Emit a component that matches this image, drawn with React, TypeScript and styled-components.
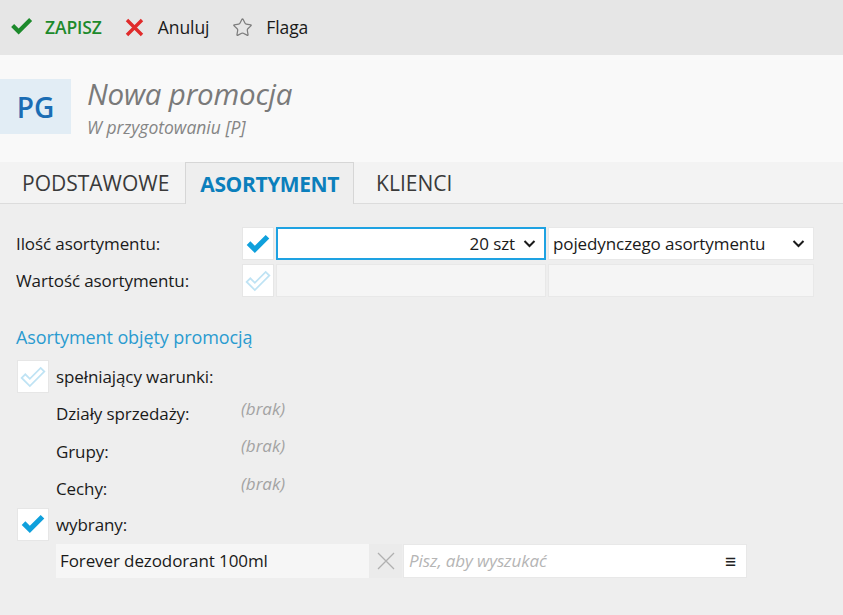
import styled, { createGlobalStyle } from 'styled-components'
import { Star } from 'lucide-react'

const GlobalStyle = createGlobalStyle`
  html, body {
    margin: 0;
    padding: 0;
    background: #eeeeee;
    font-family: 'Open Sans', 'Noto Sans', sans-serif;
    color: #1a1a1a;
  }
  * { box-sizing: border-box; }
`

const Page = styled.div`
  width: 843px;
  min-height: 615px;
  background: #eeeeee;
`

const Toolbar = styled.div`
  height: 55px;
  background: #e6e6e6;
  display: flex;
  align-items: center;
  padding-left: 10px;
  padding-bottom: 1px;
  gap: 23px;
`

const ToolButton = styled.div<{ $color?: string; $bold?: boolean; $gap?: number }>`
  display: flex;
  align-items: center;
  gap: ${(p) => p.$gap || 13}px;
  font-size: 17.5px;
  letter-spacing: -0.1px;
  color: ${(p) => p.$color || '#1a1a1a'};
  font-weight: ${(p) => (p.$bold ? 600 : 400)};
`

const Header = styled.div`
  background: #f9f9f9;
  height: 107px;
  display: flex;
  align-items: flex-start;
  padding-top: 24px;
`

const Avatar = styled.div`
  width: 71px;
  height: 55px;
  background: #e2edf5;
  color: #1b6db4;
  font-size: 28px;
  font-weight: 600;
  display: flex;
  align-items: center;
  justify-content: center;
`

const TitleBlock = styled.div`
  margin-left: 16px;
  margin-top: -4px;
  display: flex;
  flex-direction: column;
`

const Title = styled.div`
  font-size: 29.5px;
  font-style: italic;
  color: #7a7a7a;
  line-height: 38px;
  letter-spacing: -0.2px;
`

const Subtitle = styled.div`
  font-size: 17.5px;
  font-style: italic;
  color: #858585;
  line-height: 22px;
  margin-top: 3px;
`

const TabStrip = styled.div`
  height: 42px;
  background: #f3f3f3;
  border-bottom: 1px solid #dcdcdc;
  display: flex;
`

const Tab = styled.div<{ $active?: boolean }>`
  height: ${(p) => (p.$active ? '42px' : '41px')};
  padding: 0 ${(p) => (p.$active ? '14px' : '16px')} 0 ${(p) => (p.$active ? '14px' : '22px')};
  display: flex;
  align-items: center;
  font-size: 21px;
  letter-spacing: ${(p) => (p.$active ? '-0.4px' : '0')};
  text-transform: uppercase;
  color: ${(p) => (p.$active ? '#0b7fbc' : '#3a3a3a')};
  font-weight: ${(p) => (p.$active ? 700 : 400)};
  background: ${(p) => (p.$active ? '#eeeeee' : 'transparent')};
  border: ${(p) => (p.$active ? '1px solid #d6d6d6' : 'none')};
  border-bottom: none;
`

const Content = styled.div`
  padding: 23px 16px 0 16px;
`

const FormGrid = styled.div`
  display: grid;
  grid-template-columns: 226px 32px 270px 266px;
  column-gap: 2px;
  row-gap: 4px;
  align-items: center;
  margin-left: -2px;
`

const Label = styled.div`
  font-size: 17px;
  letter-spacing: -0.1px;
  color: #1a1a1a;
`

const FormLabel = styled(Label)`
  padding-left: 2px;
`

const CheckBox = styled.div`
  width: 32px;
  height: 33px;
  background: #ffffff;
  border: 1px solid #e6e6e6;
  display: flex;
  align-items: center;
  justify-content: center;
`

const Field = styled.div<{ $focused?: boolean; $disabled?: boolean }>`
  height: 33px;
  background: ${(p) => (p.$disabled ? '#f5f5f5' : '#ffffff')};
  border: ${(p) => (p.$focused ? '2px solid #1ea2e2' : '1px solid #e8e8e8')};
  display: flex;
  align-items: center;
  padding: 0 8px 0 4px;
  font-size: 17px;
  letter-spacing: -0.1px;
  color: #1a1a1a;
`

const FieldText = styled.span<{ $right?: boolean }>`
  flex: 1;
  text-align: ${(p) => (p.$right ? 'right' : 'left')};
  padding-right: ${(p) => (p.$right ? '8px' : '0')};
`

const SectionTitle = styled.div`
  margin-top: 28px;
  font-size: 18px;
  letter-spacing: -0.1px;
  color: #2a9bd0;
`

const CondList = styled.div`
  margin-top: 11px;
  padding-left: 1px;
  display: flex;
  flex-direction: column;
`

const CheckRow = styled.div`
  display: flex;
  align-items: center;
  gap: 7px;
  height: 33px;
`

const SubRow = styled.div`
  display: grid;
  grid-template-columns: 185px auto;
  padding-left: 39px;
  height: 37.5px;
  align-items: center;
`

const SubRowFirst = styled(SubRow)`
  margin-top: 2px;
`

const Empty = styled.div`
  font-size: 17px;
  font-style: italic;
  color: #a3a3a3;
  margin-top: -11px;
`

const PickerRow = styled.div`
  margin-top: 3px;
  margin-left: 40px;
  display: flex;
  height: 34px;
`

const Picked = styled.div`
  width: 313px;
  background: #f6f6f6;
  display: flex;
  align-items: center;
  padding-left: 4px;
  font-size: 17px;
  letter-spacing: -0.1px;
`

const ClearButton = styled.div`
  width: 33px;
  background: #ebebeb;
  display: flex;
  align-items: center;
  justify-content: center;
`

const Search = styled.div`
  width: 344px;
  margin-left: 1px;
  background: #ffffff;
  border: 1px solid #e8e8e8;
  display: flex;
  align-items: center;
  padding: 0 10px 0 5px;
  font-size: 17px;
`

const Placeholder = styled.span`
  flex: 1;
  font-style: italic;
  color: #b5b5b5;
  letter-spacing: -0.1px;
`

const Burger = styled.span`
  font-size: 19px;
  font-weight: 600;
  color: #222;
`

const Chevron = () => (
  <svg width="13" height="9" viewBox="0 0 13 9">
    <path d="M1.5 2 L6.5 7 L11.5 2" fill="none" stroke="#1a1a1a" strokeWidth="2" />
  </svg>
)

const checkPoints = '3,15 7,11 12,16 24,4 28,8 12,24'

const Tick = ({ variant }: { variant: 'on' | 'off' }) => (
  <svg width="28" height="26" viewBox="0 0 31 28">
    {variant === 'on' ? (
      <polygon points={checkPoints} fill="#0fa0dc" />
    ) : (
      <polygon
        points={checkPoints}
        fill="none"
        stroke="#bfe3f4"
        strokeWidth="2"
        strokeLinejoin="miter"
      />
    )}
  </svg>
)

const GreenCheck = () => (
  <svg width="24" height="18" viewBox="0 0 31 24">
    <polygon points="1,12 5,8 11,14 25,0 29,4 11,22" fill="#1d8a2c" />
  </svg>
)

const RedCross = () => (
  <svg width="19" height="19" viewBox="0 0 19 19">
    <path d="M2 2 L17 17 M17 2 L2 17" stroke="#e02b2b" strokeWidth="3.4" />
  </svg>
)

const ThinCross = () => (
  <svg width="20" height="20" viewBox="0 0 20 20">
    <path d="M2 2 L18 18 M18 2 L2 18" stroke="#b0b0b0" strokeWidth="1.3" />
  </svg>
)

const App = () => {
  return (
    <Page>
      <GlobalStyle />
      <Toolbar>
        <ToolButton $color="#1d8a2c" $bold $gap={11}>
          <GreenCheck />
          ZAPISZ
        </ToolButton>
        <ToolButton $gap={14}>
          <RedCross />
          Anuluj
        </ToolButton>
        <ToolButton>
          <Star size={21} color="#7d7d7d" strokeWidth={1.4} />
          Flaga
        </ToolButton>
      </Toolbar>

      <Header>
        <Avatar>PG</Avatar>
        <TitleBlock>
          <Title>Nowa promocja</Title>
          <Subtitle>W przygotowaniu [P]</Subtitle>
        </TitleBlock>
      </Header>

      <TabStrip>
        <Tab>Podstawowe</Tab>
        <Tab $active>Asortyment</Tab>
        <Tab>Klienci</Tab>
      </TabStrip>

      <Content>
        <FormGrid>
          <FormLabel>Ilość asortymentu:</FormLabel>
          <CheckBox>
            <Tick variant="on" />
          </CheckBox>
          <Field $focused>
            <FieldText $right>20 szt</FieldText>
            <Chevron />
          </Field>
          <Field>
            <FieldText>pojedynczego asortymentu</FieldText>
            <Chevron />
          </Field>

          <FormLabel>Wartość asortymentu:</FormLabel>
          <CheckBox>
            <Tick variant="off" />
          </CheckBox>
          <Field $disabled />
          <Field $disabled />
        </FormGrid>

        <SectionTitle>Asortyment objęty promocją</SectionTitle>

        <CondList>
          <CheckRow>
            <CheckBox>
              <Tick variant="off" />
            </CheckBox>
            <Label>spełniający warunki:</Label>
          </CheckRow>
          <SubRowFirst>
            <Label>Działy sprzedaży:</Label>
            <Empty>(brak)</Empty>
          </SubRowFirst>
          <SubRow>
            <Label>Grupy:</Label>
            <Empty>(brak)</Empty>
          </SubRow>
          <SubRow>
            <Label>Cechy:</Label>
            <Empty>(brak)</Empty>
          </SubRow>
          <CheckRow>
            <CheckBox>
              <Tick variant="on" />
            </CheckBox>
            <Label>wybrany:</Label>
          </CheckRow>
        </CondList>

        <PickerRow>
          <Picked>Forever dezodorant 100ml</Picked>
          <ClearButton>
            <ThinCross />
          </ClearButton>
          <Search>
            <Placeholder>Pisz, aby wyszukać</Placeholder>
            <Burger>≡</Burger>
          </Search>
        </PickerRow>
      </Content>
    </Page>
  )
}

export default App
